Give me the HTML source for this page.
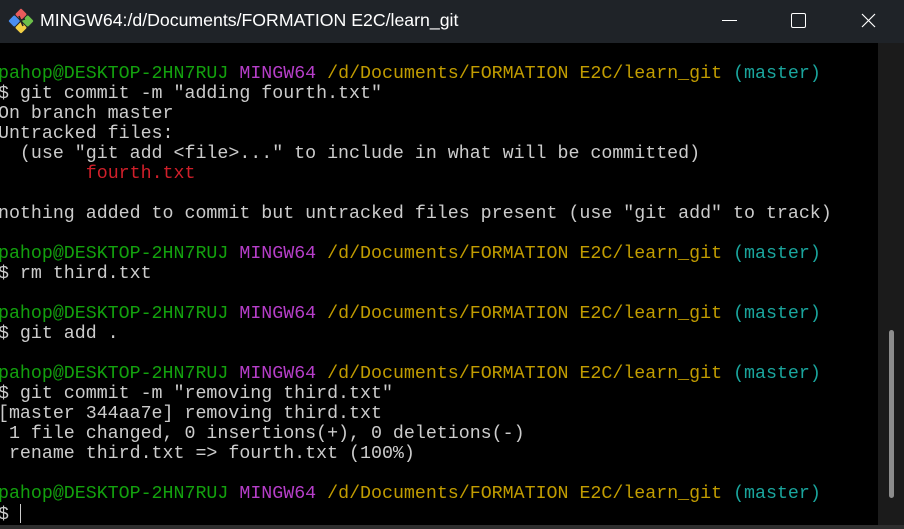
<!DOCTYPE html>
<html><head><meta charset="utf-8"><style>
html,body{margin:0;padding:0;width:904px;height:529px;overflow:hidden;background:#000;}
#title{position:absolute;left:0;top:0;width:904px;height:43px;background:#1f2328;}
#title .t{position:absolute;left:40px;top:10px;font:17.7px "Liberation Sans",sans-serif;color:#fff;}
#term{position:absolute;left:0;top:43px;width:878px;height:482px;background:#000;overflow:hidden;}
#strip{position:absolute;left:878px;top:43px;width:26px;height:482px;background:#1b1b1b;}
#thumb{position:absolute;left:889px;top:330px;width:5px;height:168px;background:#8c8c8c;border-radius:3px;}
#bot{position:absolute;left:0;top:525px;width:904px;height:4px;background:#2e2e2e;}
pre{position:absolute;left:-13px;top:21px;margin:0;font:18.3px/20px "Liberation Mono",monospace;color:#cccccc;}
.g{color:#13a10e}.m{color:#b63ec9}.y{color:#c19c00}.c{color:#1aa59d}.r{color:#d01f2a}
</style></head><body>
<div id="title">
<svg style="position:absolute;left:8px;top:8px" width="26" height="26" viewBox="0 0 26 26">
<g transform="rotate(45 13 13)">
<rect x="4" y="4" width="8.5" height="8.5" rx="1.5" fill="#e95c5c"/>
<rect x="13.5" y="4" width="8.5" height="8.5" rx="1.5" fill="#6cbf4a"/>
<rect x="4" y="13.5" width="8.5" height="8.5" rx="1.5" fill="#4a8ef0"/>
<rect x="13.5" y="13.5" width="8.5" height="8.5" rx="1.5" fill="#f2cf44"/>
</g>
<path d="M11 8 L15 18 M13 12 L17 11" stroke="#222" stroke-width="1.6" fill="none"/>
</svg>
<div class="t">MINGW64:/d/Documents/FORMATION E2C/learn_git</div>
<div style="position:absolute;left:722px;top:20px;width:15px;height:1px;background:#fff"></div>
<div style="position:absolute;left:791px;top:13px;width:13px;height:13px;border:1px solid #fff;border-radius:2px"></div>
<svg style="position:absolute;left:861px;top:13px" width="15" height="15"><path d="M1 1L14 14M14 1L1 14" stroke="#fff" stroke-width="1.2"/></svg>
</div>
<div id="term"><pre><span class="g">bpahop@DESKTOP-2HN7RUJ</span> <span class="m">MINGW64</span> <span class="y">/d/Documents/FORMATION E2C/learn_git</span> <span class="c">(master)</span>
 $ git commit -m "adding fourth.txt"
 On branch master
 Untracked files:
   (use "git add &lt;file&gt;..." to include in what will be committed)
         <span class="r">fourth.txt</span>

 nothing added to commit but untracked files present (use "git add" to track)

<span class="g">bpahop@DESKTOP-2HN7RUJ</span> <span class="m">MINGW64</span> <span class="y">/d/Documents/FORMATION E2C/learn_git</span> <span class="c">(master)</span>
 $ rm third.txt

<span class="g">bpahop@DESKTOP-2HN7RUJ</span> <span class="m">MINGW64</span> <span class="y">/d/Documents/FORMATION E2C/learn_git</span> <span class="c">(master)</span>
 $ git add .

<span class="g">bpahop@DESKTOP-2HN7RUJ</span> <span class="m">MINGW64</span> <span class="y">/d/Documents/FORMATION E2C/learn_git</span> <span class="c">(master)</span>
 $ git commit -m "removing third.txt"
 [master 344aa7e] removing third.txt
  1 file changed, 0 insertions(+), 0 deletions(-)
  rename third.txt =&gt; fourth.txt (100%)

<span class="g">bpahop@DESKTOP-2HN7RUJ</span> <span class="m">MINGW64</span> <span class="y">/d/Documents/FORMATION E2C/learn_git</span> <span class="c">(master)</span>
 $ <span style="display:inline-block;width:1px;height:19px;background:#ccc;vertical-align:-4px"></span></pre></div>
<div id="strip"></div><div id="thumb"></div><div id="bot"></div>
</body></html>
